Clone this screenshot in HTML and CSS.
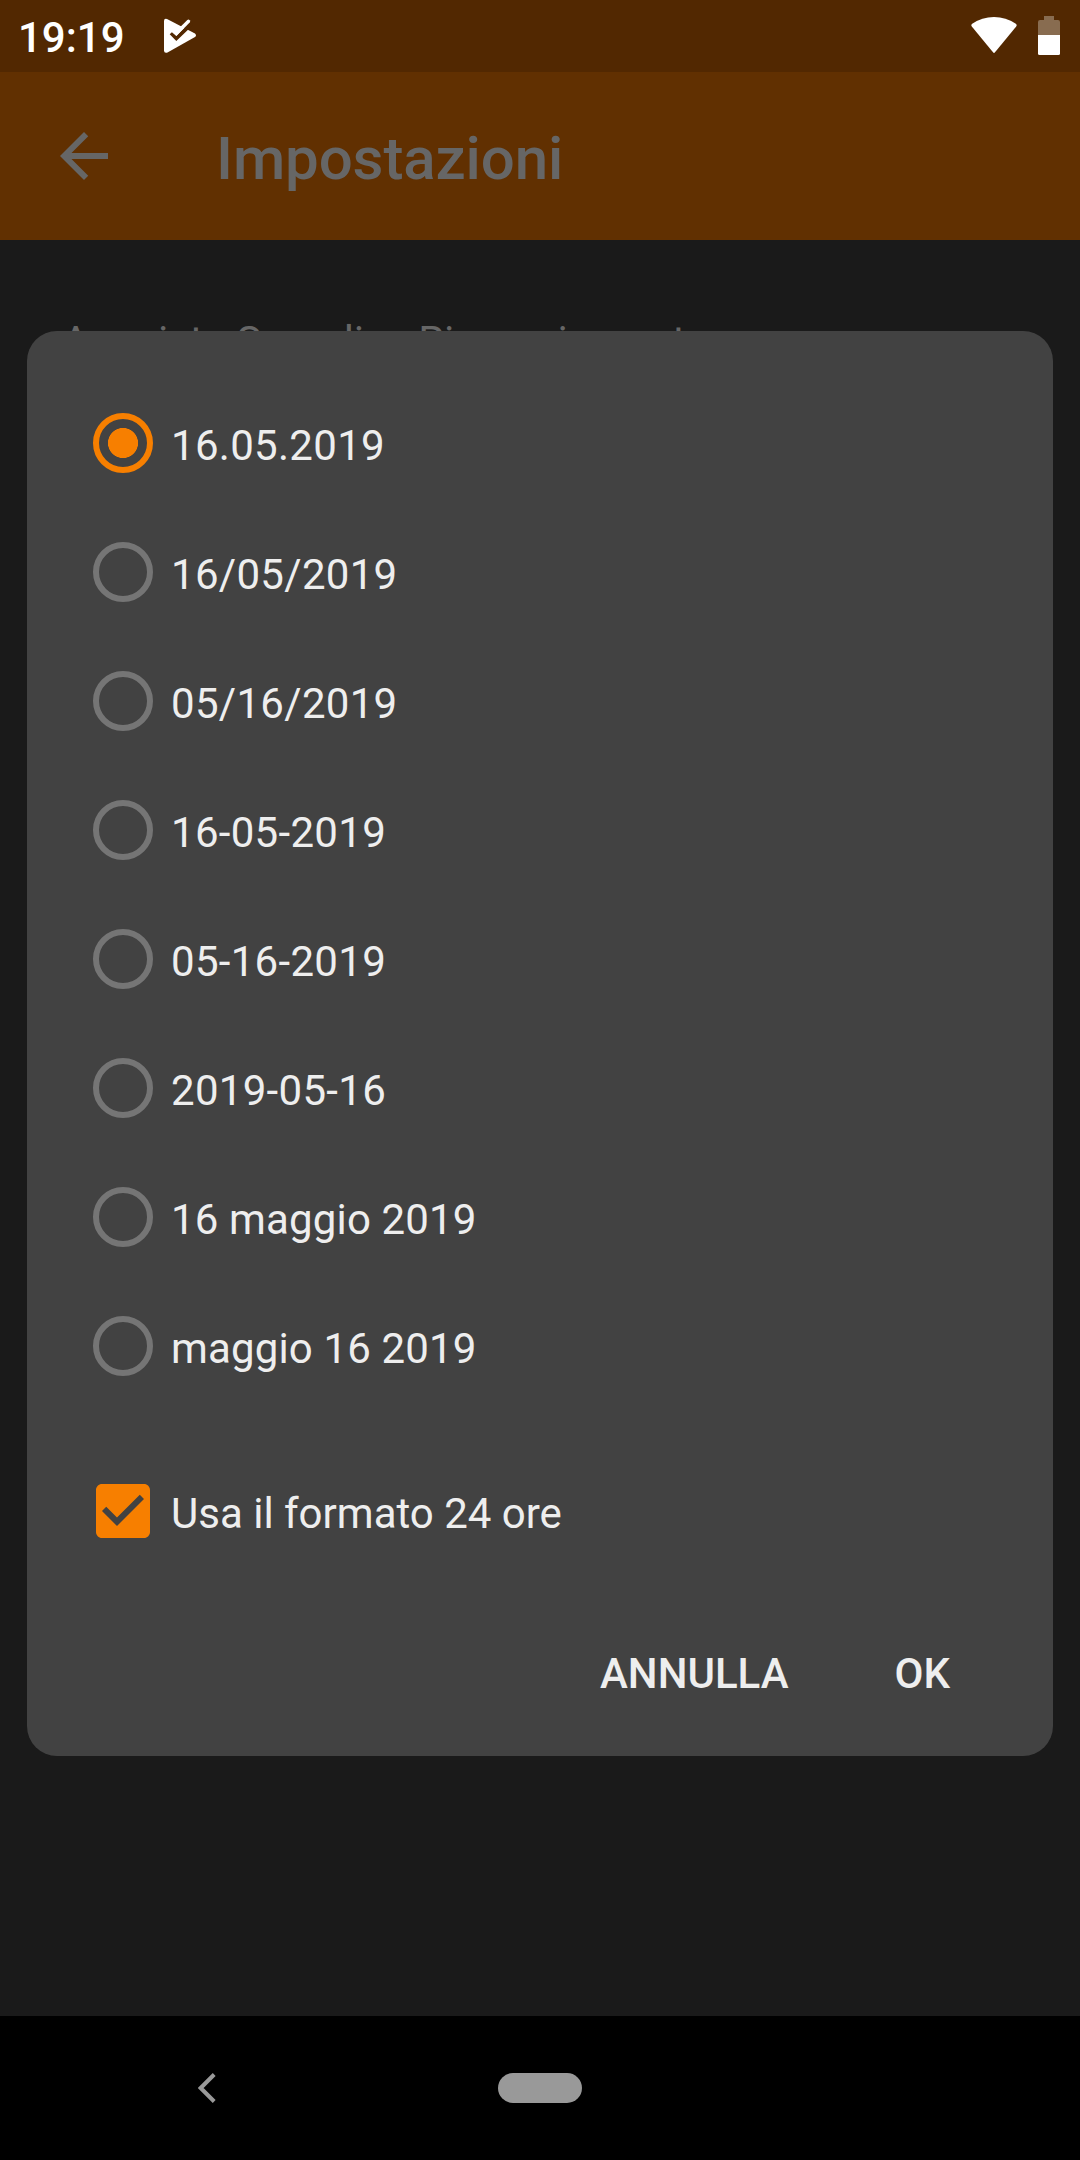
FILE: index.html
```html
<!DOCTYPE html>
<html lang="it">
<head>
    <meta charset="UTF-8">
    <meta name="viewport" content="width=device-width, initial-scale=1.0">
    <title>Impostazioni</title>
    <link rel="stylesheet" href="styles.css">
</head>
<body>
    <div class="screen">
        <div class="status-bar">
            <span class="clock">19:19</span>
            <svg class="play-icon" width="34" height="36" viewBox="0 0 34 36">
                <path fill="#fff" d="M1 3Q1 0 4 1L32 15.500Q34 17.500 32 19L4.500 34.500Q1 35.500 1 32.500Z"/>
                <path fill="#522801" d="M6.700 16.300L8.900 14.200 13.300 18 28 3 30 7 13.300 23Z"/>
                <path fill="#fff" d="M11.500 14.700L24.300 2Q25.500 1 26.700 2.200 27.700 3.500 26.700 4.600L13.300 18Z"/>
            </svg>
            <svg class="wifi-icon" width="46" height="37" viewBox="0 0 46 37">
                <path fill="#fff" d="M0.800 9.500Q-.4 8 1.200 6.800Q11 0 23 0T44.800 6.800Q46.400 8 45.200 9.500L24 35.300Q23 36.500 22 35.300Z"/>
            </svg>
            <svg class="battery-icon" width="22" height="39" viewBox="0 0 22 39">
                <path fill="#886c50" d="M6 0h10v4h4q2 0 2 2v13H0V6q0-2 2-2h4z"/>
                <path fill="#fff" d="M0 19h22v18.500q0 1.500-1.500 1.500h-19Q0 39 0 37.500z"/>
            </svg>
        </div>

        <div class="app-bar">
            <svg class="back-icon" width="48" height="48" viewBox="4 4 16 16">
                <path fill="#666" d="M20 11H7.830l5.590-5.590L12 4l-8 8 8 8 1.410-1.410L7.830 13H20v-2z"/>
            </svg>
            <h1>Impostazioni</h1>
        </div>

        <div class="content">
            <p class="setting">Acquista Semplice Ringraziamento</p>

            <form class="dialog">
                <div class="options">
                    <label class="option"><input type="radio" name="format" checked><span>16.05.2019</span></label>
                    <label class="option"><input type="radio" name="format"><span>16/05/2019</span></label>
                    <label class="option"><input type="radio" name="format"><span>05/16/2019</span></label>
                    <label class="option"><input type="radio" name="format"><span>16-05-2019</span></label>
                    <label class="option"><input type="radio" name="format"><span>05-16-2019</span></label>
                    <label class="option"><input type="radio" name="format"><span>2019-05-16</span></label>
                    <label class="option"><input type="radio" name="format"><span class="long">16 maggio 2019</span></label>
                    <label class="option"><input type="radio" name="format"><span class="long">maggio 16 2019</span></label>
                </div>
                <div class="option hours">
                    <svg class="checkbox" width="54" height="54" viewBox="3 3 18 18">
                        <path fill="#f77f00" d="M19 3H5c-1.110 0-2 .9-2 2v14c0 1.100.89 2 2 2h14c1.110 0 2-.9 2-2V5c0-1.100-.89-2-2-2zm-9 14l-5-5 1.410-1.410L10 14.170l7.590-7.590L19 8l-9 9z"/>
                    </svg>
                    <span>Usa il formato 24 ore</span>
                </div>
                <div class="actions">
                    <button type="button">ANNULLA</button>
                    <button type="button">OK</button>
                </div>
            </form>
        </div>

        <div class="nav-bar">
            <svg class="nav-back" width="18" height="30" viewBox="0 0 18 30">
                <path fill="none" stroke="#999" stroke-width="4" d="M16.200 1.500L2.700 15l13.500 13.500"/>
            </svg>
            <div class="home-pill"></div>
        </div>
    </div>
</body>
</html>
```

FILE: styles.css
```css
body {
    margin: 0;
    background: #000;
    font-family: Roboto, sans-serif;
    font-size: 42px;
    color: #eee;
}
.screen {
    display: flex;
    flex-direction: column;
    width: 1080px;
    height: 2160px;
    overflow: hidden;
}
.status-bar {
    display: flex;
    align-items: flex-start;
    box-sizing: border-box;
    height: 72px;
    padding: 16px 20px 0 18px;
    background: #522801;
}
.clock {
    width: 145px;
    line-height: 43px;
    font-weight: 500;
    color: #fff;
}
.play-icon {
    margin-top: 2px;
}
.wifi-icon {
    margin: 1px 21px 0 auto;
}
.app-bar {
    display: flex;
    align-items: center;
    height: 168px;
    padding-left: 60px;
    background: #613001;
}
h1 {
    margin: 5px 0 0 108px;
    font-size: 60px;
    font-weight: 500;
    line-height: 70px;
    letter-spacing: -0.1px;
    color: #666;
}
.content {
    position: relative;
    flex: 1;
    background: #1a1a1a;
}
.setting {
    margin: 0;
    padding: 77px 0 0 62px;
    font-size: 42px;
    line-height: 50px;
    letter-spacing: -0.1px;
    color: #666;
}
/* sits on top of the settings list */
.dialog {
    position: absolute;
    top: 91px;
    left: 27px;
    right: 27px;
    box-sizing: border-box;
    height: 1425px;
    padding: 47px 66px 0;
    border-radius: 30px;
    background: #424242;
}
.option {
    display: flex;
    align-items: center;
    height: 129px;
    line-height: 50px;
}
.option span {
    margin-top: 6px;
    letter-spacing: 0.3px;
}
.option .long {
    letter-spacing: 0.15px;
}
input[type="radio"] {
    appearance: none;
    box-sizing: border-box;
    width: 60px;
    height: 60px;
    margin: 0 18px 0 0;
    border: 6px solid #757575;
    border-radius: 50%;
}
input[type="radio"]:checked {
    border-color: #f77f00;
    background: radial-gradient(circle, #f77f00 14.700px, transparent 15.300px);
}
.hours {
    margin-top: 36px;
}
.hours span {
    letter-spacing: 0;
}
.checkbox {
    margin: 0 21px 0 3px;
}
.actions {
    display: flex;
    justify-content: flex-end;
    gap: 106px;
    margin-top: 74px;
    padding-right: 37px;
}
button {
    padding: 0;
    border: none;
    background: none;
    font: 500 42px/50px Roboto, sans-serif;
    color: #eee;
}
.nav-bar {
    display: flex;
    align-items: center;
    height: 144px;
    padding-left: 198px;
}
.home-pill {
    width: 84px;
    height: 30px;
    margin-left: 282px;
    border-radius: 15px;
    background: #999;
}
```
